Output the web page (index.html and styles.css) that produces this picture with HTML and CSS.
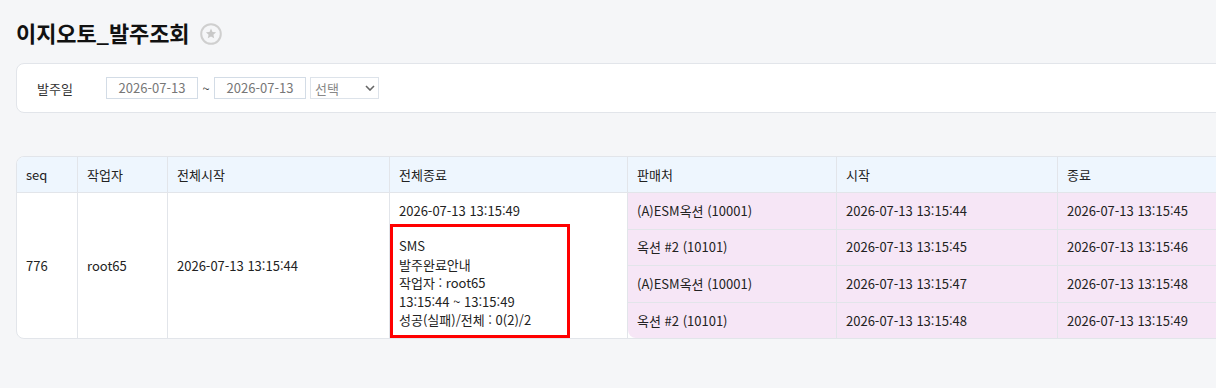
FILE: index.html
```html
<!DOCTYPE html>
<html lang="ko">
<head>
    <meta charset="UTF-8">
    <title>이지오토_발주조회</title>
    <link rel="stylesheet" href="styles.css">
</head>
<body>
<div class="page">

    <div class="title-bar">
        <h1>이지오토_발주조회</h1>
        <span class="fav">
            <svg width="22" height="22" viewBox="0 0 22 22">
                <circle cx="11" cy="11" r="9.8" fill="none" stroke="#cfcfcf" stroke-width="2"/>
                <path d="M11 5.6 L12.5 9 L16.1 9.3 L13.4 11.7 L14.2 15.3 L11 13.4 L7.8 15.3 L8.6 11.7 L5.9 9.3 L9.5 9 Z" fill="#c8c8c8"/>
            </svg>
        </span>
    </div>

    <div class="search-box">
        <span class="search-label">발주일</span>
        <div class="date-input">2026-07-13</div>
        <span class="tilde">~</span>
        <div class="date-input">2026-07-13</div>
        <div class="select-box">
            <span>선택</span>
            <svg width="10" height="6" viewBox="0 0 10 6"><path d="M1 1 L5 5 L9 1" fill="none" stroke="#666" stroke-width="1.6"/></svg>
        </div>
    </div>

    <div class="table-wrap">
        <table class="list">
            <thead>
                <tr>
                    <th class="c-seq">seq</th>
                    <th class="c-user">작업자</th>
                    <th class="c-start">전체시작</th>
                    <th class="c-end">전체종료</th>
                    <th class="c-shop">판매처</th>
                    <th class="c-time">시작</th>
                    <th class="c-time2">종료</th>
                </tr>
            </thead>
            <tbody>
                <tr>
                    <td rowspan="4">776</td>
                    <td rowspan="4">root65</td>
                    <td rowspan="4">2026-07-13 13:15:44</td>
                    <td rowspan="4" class="end-cell">
                        <div class="end-date">2026-07-13 13:15:49</div>
                        <div class="sms-box">
                            SMS<br>
                            발주완료안내<br>
                            작업자 : root65<br>
                            13:15:44 ~ 13:15:49<br>
                            성공(실패)/전체 : 0(2)/2
                        </div>
                    </td>
                    <td class="pink">(A)ESM옥션 (10001)</td>
                    <td class="pink">2026-07-13 13:15:44</td>
                    <td class="pink">2026-07-13 13:15:45</td>
                </tr>
                <tr>
                    <td class="pink">옥션 #2 (10101)</td>
                    <td class="pink">2026-07-13 13:15:45</td>
                    <td class="pink">2026-07-13 13:15:46</td>
                </tr>
                <tr>
                    <td class="pink">(A)ESM옥션 (10001)</td>
                    <td class="pink">2026-07-13 13:15:47</td>
                    <td class="pink">2026-07-13 13:15:48</td>
                </tr>
                <tr class="last">
                    <td class="pink corner">옥션 #2 (10101)</td>
                    <td class="pink">2026-07-13 13:15:48</td>
                    <td class="pink">2026-07-13 13:15:49</td>
                </tr>
            </tbody>
        </table>
    </div>

</div>
</body>
</html>
```

FILE: styles.css
```css
html, body {
    margin: 0;
    padding: 0;
}
body {
    font-family: "Noto Sans CJK KR", "Noto Sans", sans-serif;
    font-size: 13px;
    color: #222;
    background-color: #f5f6f8;
    overflow: hidden;
}
.page {
    padding: 0 0 0 16px;
    width: 1300px;
}

/* 제목 */
.title-bar {
    display: flex;
    align-items: center;
    height: 63px;
    box-sizing: border-box;
}
.title-bar h1 {
    margin: 0;
    font-size: 22px;
    font-weight: 700;
    color: #111;
    letter-spacing: -0.1px;
}
.fav {
    display: flex;
    margin: 5px 0 0 10px;
}

/* 검색 */
.search-box {
    display: flex;
    align-items: center;
    height: 50px;
    box-sizing: border-box;
    background-color: #fff;
    border: 1px solid #e2e5ea;
    border-radius: 8px;
    padding-left: 20px;
}
.search-label {
    width: 69px;
    color: #333;
}
.date-input {
    width: 92px;
    height: 22px;
    box-sizing: border-box;
    border: 1px solid #d3dce6;
    color: #777;
    line-height: 20px;
    text-align: center;
}
.tilde {
    width: 16px;
    text-align: center;
    color: #444;
}
.select-box {
    display: flex;
    align-items: center;
    justify-content: space-between;
    width: 69px;
    height: 22px;
    box-sizing: border-box;
    margin-left: 4px;
    border: 1px solid #dde3ea;
    padding: 0 3px 0 4px;
    color: #888;
}

/* 목록 */
.table-wrap {
    margin-top: 43px;
    border: 1px solid #e2e5ea;
    border-radius: 8px;
    overflow: hidden;
    background-color: #fff;
}
.list {
    border-collapse: separate;
    border-spacing: 0;
    width: 100%;
}
.list th, .list td {
    padding: 0 9px;
    text-align: left;
    font-weight: 400;
    border-right: 1px solid #e2e5ea;
    border-bottom: 1px solid #e2e5ea;
    line-height: 18px;
    white-space: nowrap;
}
.list th {
    height: 35px;
    background-color: #eef6fe;
    color: #222;
}
.list td {
    height: 35px;
}
.list tr.last td {
    border-bottom: none;
}
.list td[rowspan] {
    border-bottom: none;
}
.c-seq { width: 42px; }
.c-user { width: 71px; }
.c-start { width: 203px; }
.c-end { width: 219px; }
.c-shop { width: 190px; }
.c-time { width: 202px; }

.pink {
    background-color: #f6e6f6;
}
.corner {
    border-bottom-left-radius: 8px;
}

.end-cell {
    padding: 0 !important;
    vertical-align: top;
}
.end-date {
    padding: 9px 9px 4px;
    line-height: 18.4px;
}
.sms-box {
    width: 180px;
    box-sizing: border-box;
    border: 3px solid #f00;
    padding: 10px 6px 6px;
    line-height: 18.4px;
}
```
